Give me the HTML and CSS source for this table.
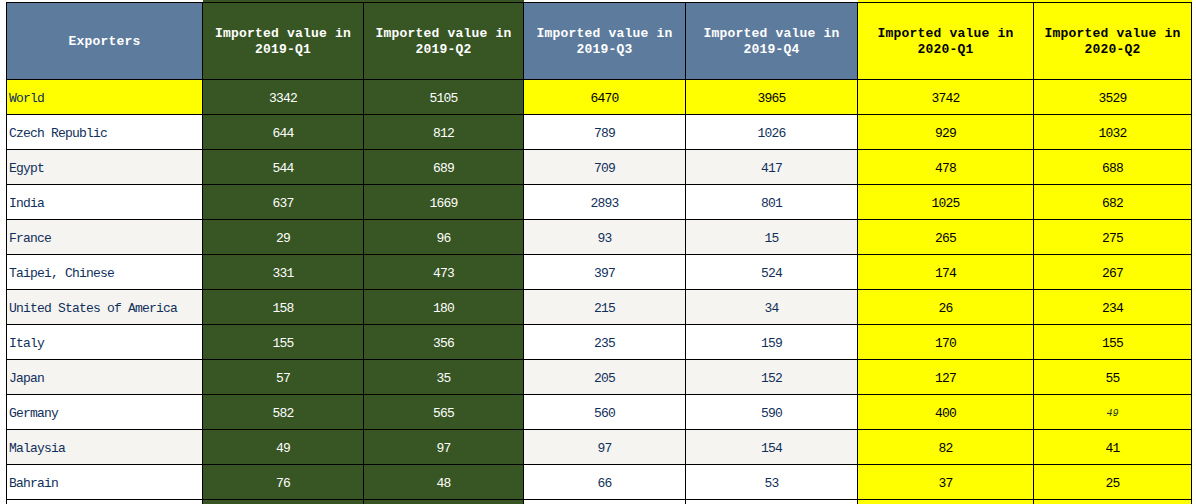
FILE: index.html
```html
<!DOCTYPE html>
<html>
<head>
<meta charset="utf-8">
<title>Imported values</title>
<link rel="stylesheet" href="styles.css">
</head>
<body>
<table class="grid">
  <colgroup>
    <col class="c-name">
    <col class="c-q1">
    <col class="c-q2">
    <col class="c-q3">
    <col class="c-q4">
    <col class="c-n1">
    <col class="c-n2">
  </colgroup>
  <thead>
    <tr class="pre">
      <td></td><td class="green"></td><td class="green"></td><td></td><td></td><td class="yellow"></td><td class="yellow"></td>
    </tr>
    <tr class="head">
      <th class="blue">Exporters</th>
      <th class="green">Imported value in<br>2019-Q1</th>
      <th class="green">Imported value in<br>2019-Q2</th>
      <th class="blue">Imported value in<br>2019-Q3</th>
      <th class="blue">Imported value in<br>2019-Q4</th>
      <th class="yellow">Imported value in<br>2020-Q1</th>
      <th class="yellow">Imported value in<br>2020-Q2</th>
    </tr>
  </thead>
  <tbody>
    <tr class="world">
      <td class="name">World</td><td class="green">3342</td><td class="green">5105</td><td>6470</td><td>3965</td><td class="yellow">3742</td><td class="yellow">3529</td>
    </tr>
    <tr class="odd">
      <td class="name">Czech Republic</td><td class="green">644</td><td class="green">812</td><td>789</td><td>1026</td><td class="yellow">929</td><td class="yellow">1032</td>
    </tr>
    <tr class="even">
      <td class="name">Egypt</td><td class="green">544</td><td class="green">689</td><td>709</td><td>417</td><td class="yellow">478</td><td class="yellow">688</td>
    </tr>
    <tr class="odd">
      <td class="name">India</td><td class="green">637</td><td class="green">1669</td><td>2893</td><td>801</td><td class="yellow">1025</td><td class="yellow">682</td>
    </tr>
    <tr class="even">
      <td class="name">France</td><td class="green">29</td><td class="green">96</td><td>93</td><td>15</td><td class="yellow">265</td><td class="yellow">275</td>
    </tr>
    <tr class="odd">
      <td class="name">Taipei, Chinese</td><td class="green">331</td><td class="green">473</td><td>397</td><td>524</td><td class="yellow">174</td><td class="yellow">267</td>
    </tr>
    <tr class="even">
      <td class="name">United States of America</td><td class="green">158</td><td class="green">180</td><td>215</td><td>34</td><td class="yellow">26</td><td class="yellow">234</td>
    </tr>
    <tr class="odd">
      <td class="name">Italy</td><td class="green">155</td><td class="green">356</td><td>235</td><td>159</td><td class="yellow">170</td><td class="yellow">155</td>
    </tr>
    <tr class="even">
      <td class="name">Japan</td><td class="green">57</td><td class="green">35</td><td>205</td><td>152</td><td class="yellow">127</td><td class="yellow">55</td>
    </tr>
    <tr class="odd">
      <td class="name">Germany</td><td class="green">582</td><td class="green">565</td><td>560</td><td>590</td><td class="yellow">400</td><td class="yellow"><span class="note">49</span></td>
    </tr>
    <tr class="even">
      <td class="name">Malaysia</td><td class="green">49</td><td class="green">97</td><td>97</td><td>154</td><td class="yellow">82</td><td class="yellow">41</td>
    </tr>
    <tr class="odd">
      <td class="name">Bahrain</td><td class="green">76</td><td class="green">48</td><td>66</td><td>53</td><td class="yellow">37</td><td class="yellow">25</td>
    </tr>
    <tr class="tail">
      <td class="name"></td><td class="green"></td><td class="green"></td><td></td><td></td><td class="yellow"></td><td class="yellow"></td>
    </tr>
  </tbody>
</table>
</body>
</html>
```

FILE: styles.css
```css
html {
  overflow: hidden;
  background: #ffffff;
}

body {
  margin: 0;
  padding: 0 0 0 6px;
  font-family: "Liberation Mono", "Noto Sans CJK SC", monospace;
  font-size: 13px;
  letter-spacing: -0.8px;
  color: #10305a;
}

.grid {
  border-collapse: collapse;
  table-layout: fixed;
  width: 1185px;
  margin-top: 0;
}

.c-name { width: 196px; }
.c-q1 { width: 161px; }
.c-q2 { width: 160px; }
.c-q3 { width: 162px; }
.c-q4 { width: 172px; }
.c-n1 { width: 176px; }
.c-n2 { width: 158px; }

.grid td,
.grid th {
  border: 1px solid #000000;
  padding: 0 2px;
  text-align: center;
  vertical-align: middle;
  white-space: nowrap;
  overflow: hidden;
}

.grid .pre td {
  border: none;
  height: 2px;
  padding: 0;
  line-height: 0;
  font-size: 0;
}

.grid .head th {
  height: 74px;
  padding-top: 2px;
  font-weight: bold;
  font-size: 13px;
  letter-spacing: 0.2px;
  line-height: 16px;
  color: #ffffff;
}

.grid tbody td {
  height: 31px;
  padding-top: 3px;
  line-height: 16px;
}

.grid td.name {
  text-align: left;
  padding-left: 2px;
}

.blue { background: #5c7b9d; }

.grid .green {
  background: #375623;
  color: #ffffff;
}

.grid .yellow {
  background: #ffff00;
  color: #000000;
}

.grid .head th.yellow {
  color: #000000;
}

.odd td { background: #ffffff; }
.even td { background: #f5f4f1; }

.world td {
  background: #ffff00;
  color: #000000;
}

.world td.name { color: #10305a; }

.grid tbody tr td.green { background: #375623; }
.grid tbody tr td.yellow { background: #ffff00; }

.tail td { background: #ffffff; }

.note {
  font-style: italic;
  font-size: 10px;
  letter-spacing: 0;
  color: #1f3a2a;
}
```
